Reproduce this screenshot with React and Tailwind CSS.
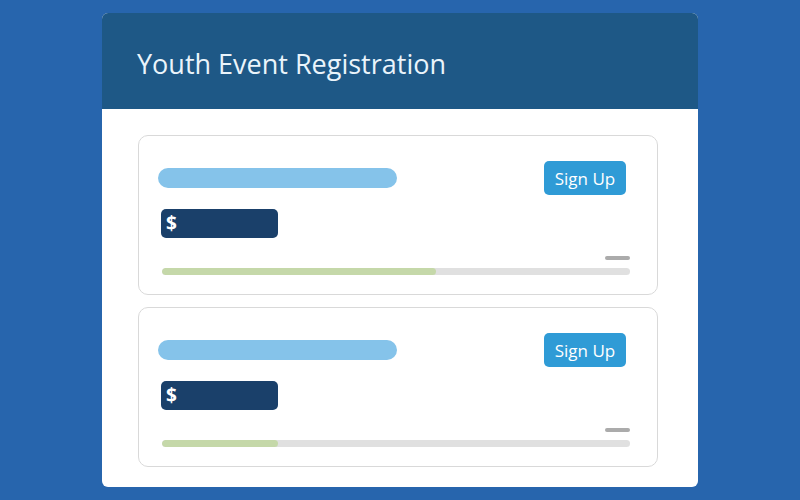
export default function App() {
  const events = [
    { id: 1, progress: 274 },
    { id: 2, progress: 116 },
  ];

  return (
    <main className="w-full h-[500px] bg-[#2765ad] flex flex-col items-center overflow-hidden font-['Open_Sans',sans-serif]">
      <section className="mt-[13px] w-[596px] h-[474px] bg-white rounded-[6px] overflow-hidden flex flex-col">
        <header className="h-[96px] bg-[#1e5886] flex items-center pl-[35px] pt-[4px]">
          <h1 className="text-[27px] text-[#eaf4fb] leading-none">Youth Event Registration</h1>
        </header>
        <div className="pt-[26px] pl-[36px] flex flex-col gap-[12px]">
          {events.map((ev) => (
            <div key={ev.id} className="w-[520px] border border-[#d9d9d9] rounded-[10px] flex flex-col pt-[25px] pb-[19px]">
              <div className="flex items-center justify-between">
                <div className="ml-[19px] w-[239px] h-5 rounded-full bg-[#85c3ea]" />
                <button className="mr-[31px] w-[82px] h-[34px] rounded-[5px] bg-[#2f9bd6] text-white text-[17px] leading-none">
                  Sign Up
                </button>
              </div>
              <div className="mt-[14px] ml-[22px] w-[117px] h-[29px] rounded-[5px] bg-[#1a406a] flex items-center pl-[5px]">
                <span className="text-white font-bold text-[19px] leading-none">$</span>
              </div>
              <div className="mt-[18px] self-end mr-[27px] w-[25px] h-[4px] rounded-full bg-[#ababab]" />
              <div className="mt-[8px] ml-[23px] mr-[27px] h-[7px] rounded-full bg-[#e0e0e0] overflow-hidden">
                <div className="h-full rounded-full bg-[#c5d8a9]" style={{ width: ev.progress }} />
              </div>
            </div>
          ))}
        </div>
      </section>
    </main>
  );
}
